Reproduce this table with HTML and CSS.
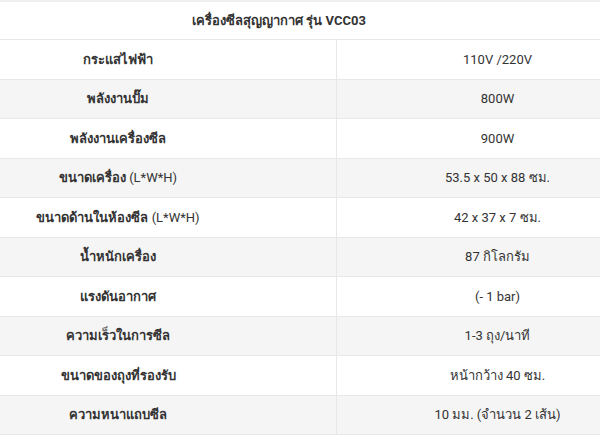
FILE: index.html
```html
<!DOCTYPE html>
<html lang="th">
<head>
<meta charset="utf-8">
<link rel="stylesheet" href="styles.css">
</head>
<body>
<div class="frame">
  <table class="spec">
    <tbody>
      <tr><td class="head" colspan="2"><span class="title">เครื่องซีลสุญญากาศ</span> <span class="title">รุ่น</span> <span class="title">VCC03</span></td></tr>
      <tr><td class="k">กระแสไฟฟ้า</td><td class="v">110V /220V</td></tr>
      <tr class="alt"><td class="k">พลังงานปั๊ม</td><td class="v">800W</td></tr>
      <tr><td class="k">พลังงานเครื่องซีล</td><td class="v">900W</td></tr>
      <tr class="alt"><td class="k">ขนาดเครื่อง <span class="lat">(L*W*H)</span></td><td class="v">53.5 x 50 x 88 ซม.</td></tr>
      <tr><td class="k">ขนาดด้านในห้องซีล <span class="lat">(L*W*H)</span></td><td class="v">42 x 37 x 7 ซม.</td></tr>
      <tr class="alt"><td class="k">น้ำหนักเครื่อง</td><td class="v">87 กิโลกรัม</td></tr>
      <tr><td class="k">แรงดันอากาศ</td><td class="v">(- 1 bar)</td></tr>
      <tr class="alt"><td class="k">ความเร็วในการซีล</td><td class="v">1-3 ถุง/นาที</td></tr>
      <tr><td class="k">ขนาดของถุงที่รองรับ</td><td class="v">หน้ากว้าง 40 ซม.</td></tr>
      <tr class="alt"><td class="k">ความหนาแถบซีล</td><td class="v">10 มม. (จำนวน 2 เส้น)</td></tr>
    </tbody>
  </table>
</div>
</body>
</html>
```

FILE: styles.css
```css
html, body {
  margin: 0;
  padding: 0;
  background: #ffffff;
}
.frame {
  width: 600px;
  height: 435px;
  overflow: hidden;
  border-top: 2px solid #f0f0f0;
  box-sizing: border-box;
}
.spec {
  width: 758px;
  margin-left: -100px;
  border-collapse: collapse;
  font-family: "Roboto", "Noto Sans", sans-serif;
  font-size: 13px;
  color: #333333;
}
.spec td {
  height: 38.5px;
  padding: 0;
  text-align: center;
  border-bottom: 1px solid #e8e8e8;
}
.spec td.head {
  height: 37px;
  background: #ffffff;
}
.title {
  font-weight: 700;
}
.spec td.k {
  width: 436px;
  font-weight: 700;
  border-right: 1px solid #e8e8e8;
}
.spec td.k .lat {
  font-weight: 400;
}
.spec td.v {
  font-weight: 400;
}
.spec tr.alt td {
  background: #f5f5f5;
}
```
